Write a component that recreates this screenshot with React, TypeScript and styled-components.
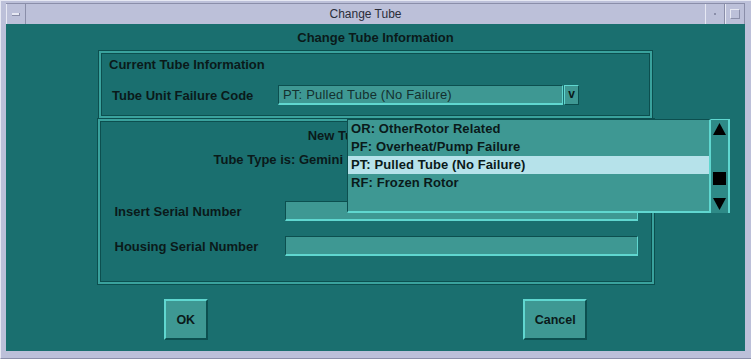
import styled, { createGlobalStyle } from "styled-components";

const colors = {
  frame: "#bcc0d9",
  frameDark: "#8a8ea9",
  frameLight: "#e6e8f3",
  teal: "#1a6f6f",
  field: "#3e9893",
  edge: "#60d7d0",
  panelEdge: "#3aa29d",
  shadow: "#0c4f4f",
  text: "#0a1a1a",
  select: "#b6e2ea",
};

const GlobalStyle = createGlobalStyle`
  html, body {
    margin: 0;
    padding: 0;
    background: ${colors.frame};
  }
  body {
    font-family: "Liberation Sans", Arial, sans-serif;
  }
`;

const Window = styled.div`
  width: 751px;
  height: 359px;
  box-sizing: border-box;
  background: ${colors.frame};
  padding: 2px 6px 7px 5px;
  display: flex;
  flex-direction: column;
  border-top: 1px solid ${colors.frameLight};
  border-left: 1px solid ${colors.frameLight};
  border-bottom: 1px solid ${colors.frameDark};
  position: relative;
`;

const TitleBar = styled.div`
  height: 20px;
  display: flex;
  align-items: stretch;
  border-top: 1px solid ${colors.frameDark};
`;

const TitleButton = styled.div`
  width: 18px;
  display: flex;
  align-items: center;
  justify-content: center;
  border-left: 1px solid ${colors.frameLight};
  border-right: 1px solid ${colors.frameDark};
`;

const Title = styled.div`
  flex: 1;
  text-align: center;
  font-size: 12px;
  line-height: 20px;
  color: #2a2d3a;
`;

const MenuMark = styled.span`
  width: 7px;
  height: 2px;
  background: ${colors.frameLight};
  border-bottom: 1px solid ${colors.frameDark};
  border-right: 1px solid ${colors.frameDark};
`;

const DotMark = styled.span`
  width: 2px;
  height: 2px;
  background: ${colors.frameDark};
`;

const SquareMark = styled.span`
  width: 8px;
  height: 8px;
  border-top: 1px solid ${colors.frameLight};
  border-left: 1px solid ${colors.frameLight};
  border-bottom: 1px solid ${colors.frameDark};
  border-right: 1px solid ${colors.frameDark};
`;

const Content = styled.div`
  flex: 1;
  background: ${colors.teal};
  position: relative;
  display: flex;
  flex-direction: column;
  align-items: center;
  padding-top: 4px;
  color: ${colors.text};
  font-size: 13px;
  font-weight: bold;
`;

const Heading = styled.div`
  line-height: 20px;
`;

const Panel = styled.div<{ $w: number; $h: number; $top: number }>`
  width: ${(p) => p.$w}px;
  height: ${(p) => p.$h}px;
  margin-top: ${(p) => p.$top}px;
  box-sizing: border-box;
  border: 2px solid ${colors.panelEdge};
  box-shadow: inset 0 0 0 1px ${colors.shadow}, 0 0 0 1px ${colors.shadow};
  display: flex;
  flex-direction: column;
`;

const PanelTitle = styled.div<{ $center?: boolean }>`
  line-height: 16px;
  padding: ${(p) => (p.$center ? "7px 0 0" : "4px 0 0 8px")};
  text-align: ${(p) => (p.$center ? "center" : "left")};
`;

const TypeLine = styled.div`
  line-height: 16px;
  margin-top: 8px;
  padding-left: 114px;
`;

const Row = styled.div<{ $top: number; $labelW: number; $left: number }>`
  display: flex;
  align-items: center;
  height: 20px;
  margin-top: ${(p) => p.$top}px;
  padding-left: ${(p) => p.$left}px;

  & > label {
    width: ${(p) => p.$labelW}px;
    flex: none;
  }
`;

const Field = styled.div<{ $w: number }>`
  width: ${(p) => p.$w}px;
  height: 20px;
  box-sizing: border-box;
  background: ${colors.field};
  border-top: 1px solid ${colors.shadow};
  border-left: 1px solid ${colors.shadow};
  border-bottom: 2px solid ${colors.edge};
  border-right: 1px solid ${colors.edge};
  font-weight: normal;
  font-size: 13px;
  line-height: 17px;
  padding-left: 4px;
  color: #13302f;
  letter-spacing: 0.2px;
`;

const VButton = styled.div`
  width: 15px;
  height: 20px;
  box-sizing: border-box;
  background: ${colors.field};
  border: 1px solid ${colors.edge};
  border-right-color: ${colors.shadow};
  border-bottom-color: ${colors.shadow};
  text-align: center;
  line-height: 17px;
  font-size: 12px;
  margin-left: 1px;
`;

const ButtonRow = styled.div`
  width: 100%;
  display: flex;
  justify-content: space-around;
  margin-top: 15px;
`;

const DialogButton = styled.div<{ $w: number }>`
  width: ${(p) => p.$w}px;
  height: 41px;
  box-sizing: border-box;
  background: ${colors.field};
  border-top: 2px solid ${colors.edge};
  border-left: 2px solid ${colors.edge};
  border-bottom: 2px solid ${colors.shadow};
  border-right: 2px solid ${colors.shadow};
  display: flex;
  align-items: center;
  justify-content: center;
  font-size: 12.5px;
`;

const DropList = styled.div`
  position: absolute;
  left: 341px;
  top: 95px;
  width: 383px;
  height: 94px;
  display: flex;
`;

const ListBox = styled.div`
  flex: 1;
  box-sizing: border-box;
  background: ${colors.field};
  border-top: 1px solid ${colors.shadow};
  border-left: 1px solid ${colors.shadow};
  border-bottom: 2px solid ${colors.edge};
  border-right: 2px solid ${colors.edge};
`;

const ListItem = styled.div<{ $selected?: boolean }>`
  height: 18px;
  line-height: 18px;
  padding-left: 3px;
  letter-spacing: 0.1px;
  background: ${(p) => (p.$selected ? colors.select : "transparent")};
`;

const ScrollBar = styled.div`
  width: 19px;
  box-sizing: border-box;
  background: #2e8a87;
  border-top: 1px solid ${colors.edge};
  border-right: 2px solid ${colors.edge};
  display: flex;
  flex-direction: column;
  align-items: center;
  padding-top: 2px;
`;

const Thumb = styled.div`
  width: 13px;
  height: 13px;
  background: #000;
  margin-top: 36px;
`;

const Arrow = ({ up }: { up?: boolean }) => (
  <svg width="15" height="14" viewBox="0 0 15 14" style={{ marginTop: up ? 0 : 12 }}>
    {up ? (
      <polygon points="7.5,1 14,13 1,13" fill="#000" />
    ) : (
      <polygon points="1,1 14,1 7.5,13" fill="#000" />
    )}
  </svg>
);

const items = [
  "OR: OtherRotor Related",
  "PF: Overheat/Pump Failure",
  "PT: Pulled Tube (No Failure)",
  "RF: Frozen Rotor",
];

const App = () => {
  return (
    <>
      <GlobalStyle />
      <Window>
        <TitleBar>
          <TitleButton>
            <MenuMark />
          </TitleButton>
          <Title>Change Tube</Title>
          <TitleButton>
            <DotMark />
          </TitleButton>
          <TitleButton>
            <SquareMark />
          </TitleButton>
        </TitleBar>
        <Content>
          <Heading>Change Tube Information</Heading>
          <Panel $w={553} $h={67} $top={3}>
            <PanelTitle>Current Tube Information</PanelTitle>
            <Row $top={12} $labelW={166} $left={11}>
              <label>Tube Unit Failure Code</label>
              <Field $w={285}>PT: Pulled Tube (No Failure)</Field>
              <VButton>v</VButton>
            </Row>
          </Panel>
          <Panel $w={556} $h={165} $top={1}>
            <PanelTitle $center>New Tube Information</PanelTitle>
            <TypeLine>Tube Type is: Gemini</TypeLine>
            <Row $top={33} $labelW={170} $left={15}>
              <label>Insert Serial Number</label>
              <Field $w={353} />
            </Row>
            <Row $top={15} $labelW={170} $left={15}>
              <label>Housing Serial Number</label>
              <Field $w={353} />
            </Row>
          </Panel>
          <ButtonRow>
            <DialogButton $w={44}>OK</DialogButton>
            <DialogButton $w={64}>Cancel</DialogButton>
          </ButtonRow>
          <DropList>
            <ListBox>
              {items.map((it) => (
                <ListItem key={it} $selected={it.startsWith("PT")}>
                  {it}
                </ListItem>
              ))}
            </ListBox>
            <ScrollBar>
              <Arrow up />
              <Thumb />
              <Arrow />
            </ScrollBar>
          </DropList>
        </Content>
      </Window>
    </>
  );
};

export default App;
